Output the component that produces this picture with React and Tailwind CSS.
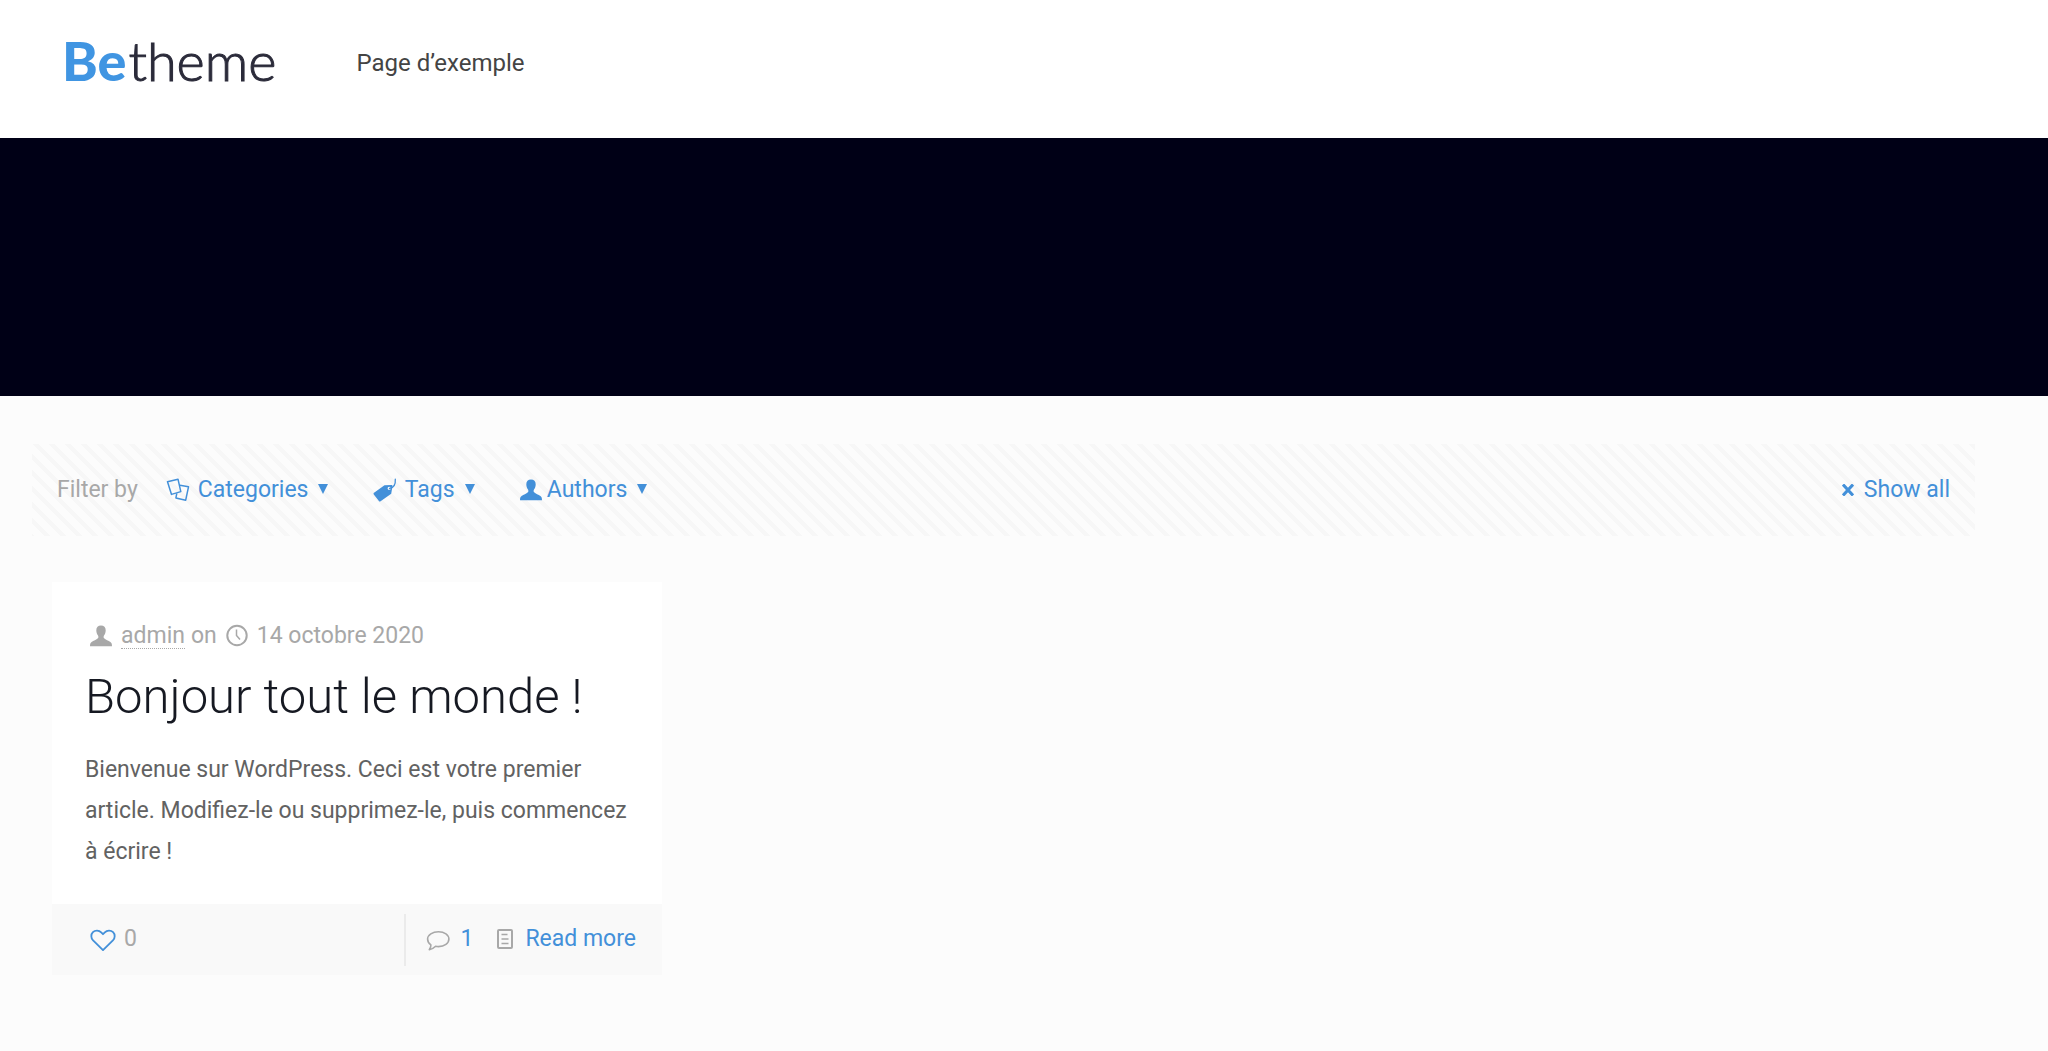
import clsx from 'clsx';

const filters = [
  { label: 'Categories', icon: CardsIcon, gap: 'gap-2', width: 'w-[207px]' },
  { label: 'Tags', icon: TagIcon, gap: 'gap-2', width: 'w-[146px]' },
  { label: 'Authors', icon: UserIcon, gap: 'gap-1', width: 'w-[146px]' },
];

function CardsIcon() {
  return (
    <svg viewBox="0 0 24 24" className="size-6 shrink-0" fill="none" stroke="currentColor" strokeWidth="1.5" strokeLinejoin="round">
      <path d="M1.5 3.8 12 1.2l2.8 12.4-9.3 2.8Z" />
      <path d="M14 7.2l8.5 1.6-2.8 13.4-9.8-2.3 .9-4.6" />
    </svg>
  );
}

function TagIcon() {
  return (
    <svg viewBox="0 0 24 24" className="size-6 shrink-0" fill="currentColor">
      <path
        fillRule="evenodd"
        d="M1 14.8 11.5 7.3l6.8-.4c.9 0 1.3.5 1.2 1.3l-1.300 7.600L7.600 23.300c-.7.500-1.300.4-1.700-.2L.8 16.400c-.4-.6-.3-1.200.2-1.600ZM16.200 8.700a1.600 1.600 0 1 0 0 3.200 1.600 1.600 0 0 0 0-3.200Z"
      />
      <path d="M16.500 10.500c4-.8 6.200-4 5.800-9.300" fill="none" stroke="currentColor" strokeWidth="1.300" strokeLinecap="round" />
    </svg>
  );
}

function UserIcon() {
  return (
    <svg viewBox="0 0 24 24" className="size-6 shrink-0" fill="currentColor">
      <path d="M12 1.500c3 0 4.700 1.900 4.700 4.800 0 2-.7 4-1.700 5.200-.5.700-.6 2.100.1 2.800 1.500 1.500 4.400 2.300 6.300 3.700 1.200.9 1.600 2 1.600 4.300H1c0-2.300.4-3.400 1.600-4.300 1.900-1.400 4.800-2.200 6.300-3.700.7-.7.6-2.100.1-2.800-1-1.200-1.700-3.200-1.700-5.200 0-2.900 1.700-4.800 4.700-4.800Z" />
    </svg>
  );
}

function ClockIcon() {
  return (
    <svg viewBox="0 0 24 24" className="size-6 shrink-0" fill="none" stroke="currentColor" strokeWidth="2">
      <circle cx="12" cy="11.500" r="9.700" />
      <path d="M11.500 5.500v6l3.500 4" strokeWidth="1.500" />
    </svg>
  );
}

function HeartIcon() {
  return (
    <svg viewBox="0 0 28 24" className="h-[22px] w-[26px] shrink-0" fill="none" stroke="currentColor" strokeWidth="2" strokeLinejoin="round">
      <path d="M14 23 3.200 12.500C.6 9.800.7 5.800 3 3.500c2.500-2.400 6.600-2.200 9 .2l2 2 2-2c2.400-2.400 6.500-2.600 9-.2 2.300 2.300 2.400 6.300-.2 9Z" />
    </svg>
  );
}

function CommentIcon() {
  return (
    <svg viewBox="0 0 24 24" className="size-6 shrink-0" fill="none" stroke="currentColor" strokeWidth="1.600" strokeLinejoin="round">
      <path d="M12.500 3.800c6 0 10.400 3.100 10.400 7.300s-4.400 7.500-10.400 7.500c-1 0-2-.1-2.900-.3-1.600 1.700-3.800 2.900-6.300 3.400 1-1.400 1.600-3 1.600-4.800C2.800 15.500 1.600 13.400 1.600 11.100c0-4.200 4.900-7.300 10.900-7.300Z" />
    </svg>
  );
}

function DocIcon() {
  return (
    <svg viewBox="0 0 24 24" className="size-6 shrink-0" fill="none" stroke="currentColor" strokeWidth="2">
      <rect x="5" y="2" width="14" height="18" rx="1" />
      <path d="M8.500 6.500h6M8.500 11h7M8.500 15.500h7" strokeWidth="1.500" />
    </svg>
  );
}

function CaretIcon() {
  return (
    <svg viewBox="0 0 10 12" className="h-3 w-[10px] shrink-0" fill="currentColor">
      <path d="M0 0h10L5 10Z" />
    </svg>
  );
}

function CrossIcon() {
  return (
    <svg viewBox="0 0 12 12" className="size-3 shrink-0" fill="none" stroke="currentColor" strokeWidth="3">
      <path d="M1 .5l10 11M11 .5l-10 11" />
    </svg>
  );
}

function Header() {
  return (
    <header className="flex items-center gap-20 bg-white px-[62px] pt-6 pb-9">
      <a href="#" className="flex items-center gap-0.5 pb-1 font-[Lato,sans-serif] text-[54px] leading-[74px]">
        <span className="font-black text-[#4095e2]">Be</span>
        <span className="font-light text-[#2b2b3a] [-webkit-text-stroke:1px_#2b2b3a]">theme</span>
      </a>
      <nav>
        <a href="#" className="text-[24px] text-[#444444]">
          Page d’exemple
        </a>
      </nav>
    </header>
  );
}

function FilterBar() {
  return (
    <div className="mr-[73px] ml-8 flex h-[92px] items-center bg-[linear-gradient(45deg,#f7f7f7_20%,transparent_20%,transparent_50%,#f7f7f7_50%,#f7f7f7_70%,transparent_70%)] bg-size-[16px_16px] px-[25px] leading-8">
      <span className="mr-7 text-[#a8a8a8]">Filter by</span>
      <ul className="flex">
        {filters.map(({ label, icon: Icon, gap, width }) => (
          <li key={label} className={width}>
            <button type="button" className="flex items-center gap-2.5 text-[#4390d9]">
              <span className={clsx('flex items-center', gap)}>
                <Icon />
                {label}
              </span>
              <CaretIcon />
            </button>
          </li>
        ))}
      </ul>
      <a href="#" className="ml-auto flex items-center gap-2.5 text-[#4390d9]">
        <CrossIcon />
        Show all
      </a>
    </div>
  );
}

function PostCard() {
  return (
    <article className="mt-[46px] ml-[52px] w-[610px]">
      <div className="bg-white px-[33px] pt-[38px] pb-8">
        <div className="ml-1 flex items-center leading-8 text-[#a8a8a8]">
          <UserIcon />
          <a href="#" className="mr-1.5 ml-2 border-b border-dotted border-[#a8a8a8] leading-6">
            admin
          </a>
          on
          <span className="mx-2">
            <ClockIcon />
          </span>
          14 octobre 2020
        </div>
        <h2 className="mt-[15px] text-[49px] leading-[60px] font-light text-[#161922]">
          <a href="#">Bonjour tout le monde !</a>
        </h2>
        <p className="mt-[22px] leading-[41px] text-[#626262]">
          Bienvenue sur WordPress. Ceci est votre premier article. Modifiez-le ou supprimez-le, puis commencez à écrire !
        </p>
      </div>
      <footer className="flex h-[71px] items-center bg-[#f9f9f9] pr-[26px] pl-[38px]">
        <button type="button" className="flex items-center gap-2 text-[#4390d9]">
          <HeartIcon />
          <span className="text-[#a8a8a8]">0</span>
        </button>
        <div className="ml-auto flex h-[52px] items-center border-l-2 border-[#ebebeb] pl-5 text-[#4390d9]">
          <span className="mr-2.5 text-[#a8a8a8]">
            <CommentIcon />
          </span>
          <a href="#">1</a>
          <span className="mr-2 ml-5 text-[#a8a8a8]">
            <DocIcon />
          </span>
          <a href="#">Read more</a>
        </div>
      </footer>
    </article>
  );
}

export default function App() {
  return (
    <div className="min-h-screen bg-[#fcfcfc] font-[Roboto,sans-serif] text-[23px]">
      <Header />
      <div className="h-[258px] bg-[#000016]" />
      <main className="pt-12 pb-16">
        <FilterBar />
        <PostCard />
      </main>
    </div>
  );
}
